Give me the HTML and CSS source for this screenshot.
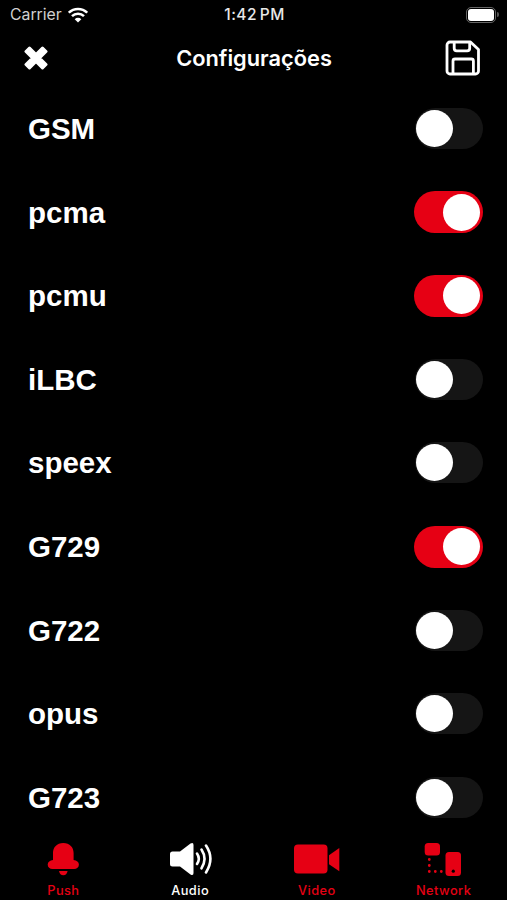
FILE: index.html
```html
<!DOCTYPE html>
<html lang="pt">
<head>
    <meta charset="UTF-8">
    <meta name="viewport" content="width=device-width, initial-scale=1.0">
    <title>Configurações</title>
    <link rel="stylesheet" href="styles.css">
</head>
<body>
    <div class="status-bar">
        <div class="carrier">
            <span>Carrier</span>
            <svg class="wifi" width="20" height="16" viewBox="0 0 20 16" fill="none" stroke="#fff" stroke-width="2.5">
                <path d="M0.8 5.7a13 13 0 0 1 18.4 0"/>
                <path d="M4 9.2a8.4 8.4 0 0 1 12 0"/>
                <path d="M6.7 12.2a4.7 4.7 0 0 1 6.6 0L10 15.5z" fill="#fff" stroke="none"/>
            </svg>
        </div>
        <span class="time">1:42 PM</span>
        <div class="battery-box">
            <div class="battery"><div class="level"></div></div>
            <div class="battery-tip"></div>
        </div>
    </div>

    <header class="header">
        <button class="icon-button">
            <svg width="24" height="24" viewBox="0 0 24 24" fill="#fff" stroke="#fff" stroke-width="3" stroke-linejoin="round">
                <path d="M5.5 2L12 8.5 18.5 2 22 5.5 15.5 12l6.5 6.5-3.5 3.5L12 15.5 5.5 22 2 18.5 8.5 12 2 5.5z"/>
            </svg>
        </button>
        <h1 class="title">Configurações</h1>
        <button class="icon-button">
            <svg width="36" height="36" viewBox="0 0 36 36" fill="none" stroke="#fff" stroke-width="2.8" stroke-linejoin="round">
                <path d="M5 2h20.5l8 7.5V31a3 3 0 0 1-3 3H5a3 3 0 0 1-3-3V5a3 3 0 0 1 3-3z"/>
                <path d="M9.2 2v6.300a2.500 2.500 0 0 0 2.500 2.500h10.500a2.500 2.500 0 0 0 2.500-2.500V2"/>
                <path d="M8 34V21a2 2 0 0 1 2-2h16.400a2 2 0 0 1 2 2V34"/>
            </svg>
        </button>
    </header>

    <main class="codecs">
        <div class="row"><span class="name">GSM</span><div class="switch"></div></div>
        <div class="row"><span class="name">pcma</span><div class="switch on"></div></div>
        <div class="row"><span class="name">pcmu</span><div class="switch on"></div></div>
        <div class="row"><span class="name">iLBC</span><div class="switch"></div></div>
        <div class="row"><span class="name">speex</span><div class="switch"></div></div>
        <div class="row"><span class="name">G729</span><div class="switch on"></div></div>
        <div class="row"><span class="name">G722</span><div class="switch"></div></div>
        <div class="row"><span class="name">opus</span><div class="switch"></div></div>
        <div class="row"><span class="name">G723</span><div class="switch"></div></div>
    </main>

    <nav class="tabs">
        <div class="tab">
            <svg width="48" height="36" viewBox="0 0 48 36" fill="currentColor">
                <path d="M24.300 2C17.800 2 14 6.400 14 12v7c-3 .400-5.300 2-5.300 4.500 0 2.800 2.100 4.500 4.800 4.500h21.600c2.700 0 4.800-1.700 4.800-4.500 0-2.500-2.300-4.100-5.300-4.500V12C34.600 6.400 30.800 2 24.300 2z"/>
                <path d="M20 30h8.600c-.5 2.800-2 4.300-4.300 4.300s-3.800-1.500-4.300-4.300z"/>
            </svg>
            <span>Push</span>
        </div>
        <div class="tab active">
            <svg width="48" height="36" viewBox="0 0 48 36" fill="currentColor">
                <path d="M6.500 10.500H14L24.500 2.500q3-1.700 3 1.500v28q0 3.200-3 1.500L14 25.500H6.500a2.500 2.500 0 0 1-2.500-2.500V13a2.500 2.500 0 0 1 2.500-2.500z"/>
                <g fill="none" stroke="currentColor" stroke-width="2.6" stroke-linecap="round">
                    <path d="M31 12.500q3.600 5.200 0 10.500"/>
                    <path d="M35.500 8.500q6 9.200 0 18.800"/>
                    <path d="M40 4.500q8.800 13.200 0 27"/>
                </g>
            </svg>
            <span>Audio</span>
        </div>
        <div class="tab">
            <svg width="48" height="36" viewBox="0 0 48 36" fill="currentColor">
                <rect x="1" y="3.5" width="33.5" height="29" rx="4"/>
                <path d="M36 14.200L46.300 7v23.200L36 23.200z"/>
            </svg>
            <span>Video</span>
        </div>
        <div class="tab">
            <svg width="48" height="36" viewBox="0 0 48 36" fill="currentColor">
                <rect x="4.7" y="2" width="15.3" height="12.5" rx="3.5"/>
                <rect x="25.5" y="11" width="15.5" height="24" rx="3.5"/>
                <path d="M9.300 18.500v12h20" fill="none" stroke="currentColor" stroke-width="2.8" stroke-linecap="round" stroke-dasharray="0 6"/>
                <circle cx="33.3" cy="30.2" r="1.6" fill="#000"/>
            </svg>
            <span>Network</span>
        </div>
    </nav>
</body>
</html>
```

FILE: styles.css
```css
* {
  box-sizing: border-box;
}

body {
  margin: 0;
  height: 900px;
  display: flex;
  flex-direction: column;
  overflow: hidden;
  background-color: #000;
  color: #fff;
  font-family: Inter, "Liberation Sans", sans-serif;
}

.status-bar {
  height: 29px;
  display: grid;
  grid-template-columns: 1fr auto 1fr;
  align-items: center;
  padding: 0 8px 0 10px;
  font-size: 15.8px;
}

.carrier {
  display: flex;
  align-items: center;
  gap: 6px;
  color: #d0d0d0;
}

.time {
  color: #e8e8e8;
  font-weight: 500;
  font-size: 15.5px;
  letter-spacing: 0.5px;
  word-spacing: -2px;
}

.battery-box {
  display: flex;
  align-items: center;
  justify-content: flex-end;
  gap: 1px;
}

.battery {
  width: 30px;
  height: 16px;
  padding: 1px;
  border: 1px solid #666;
  border-radius: 5px;
}

.level {
  height: 100%;
  background-color: #fff;
  border-radius: 3px;
}

.battery-tip {
  width: 2px;
  height: 5px;
  background-color: #555;
  border-radius: 0 2px 2px 0;
}

.header {
  height: 58px;
  display: flex;
  align-items: center;
  justify-content: space-between;
  padding: 0 26px 1px 24px;
}

.icon-button {
  width: 36px;
  height: 36px;
  display: flex;
  align-items: center;
  padding: 0;
  border: none;
  background: none;
}

.title {
  margin: 0;
  padding-left: 3px;
  font-size: 21.8px;
  font-weight: 600;
}

.codecs {
  height: 752px;
  display: grid;
  grid-template-rows: repeat(9, 1fr);
  padding: 0 24px 0 28px;
}

.row {
  display: flex;
  align-items: center;
  justify-content: space-between;
}

.name {
  padding-top: 1px;
  font: bold 29.5px "Liberation Sans", Arial, sans-serif;
}

.switch {
  width: 68px;
  height: 41px;
  display: flex;
  align-items: center;
  padding: 0 2px 0 1px;
  border-radius: 21px;
  background-color: #151515;
}

.switch::before {
  content: "";
  width: 37px;
  height: 37px;
  border-radius: 50%;
  background-color: #fff;
}

.switch.on {
  width: 69px;
  height: 42px;
  justify-content: flex-end;
  padding-right: 3px;
  background-color: #e60014;
}

.tabs {
  flex: 1;
  display: grid;
  grid-template-columns: repeat(4, 1fr);
  padding-top: 2px;
}

.tab {
  display: flex;
  flex-direction: column;
  align-items: center;
  color: #e60014;
  font-size: 12.8px;
  font-weight: 500;
  line-height: 16px;
  letter-spacing: 0.45px;
}

.tab span {
  margin-top: 6px;
}

.tab.active {
  color: #fff;
}
```
